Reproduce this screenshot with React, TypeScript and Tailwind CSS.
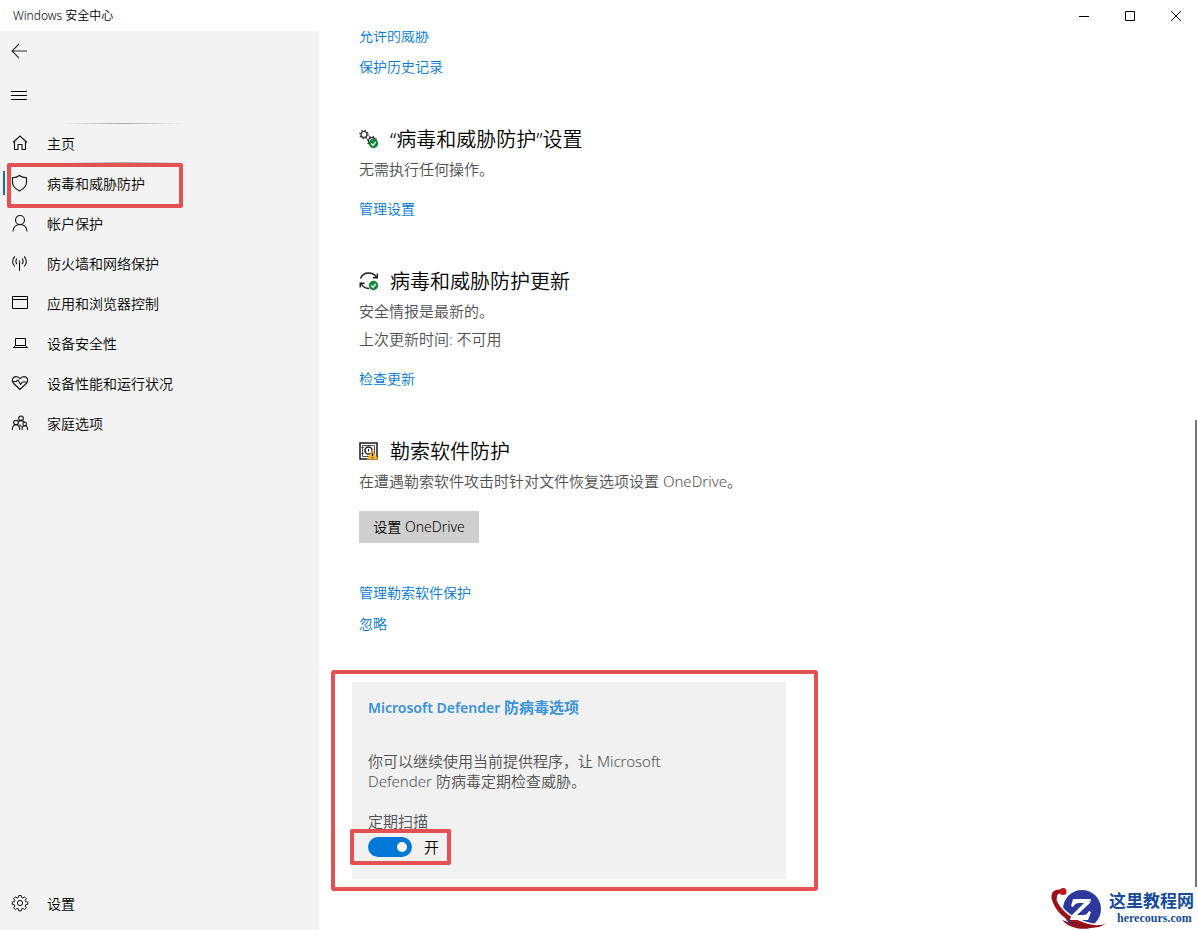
import React from "react";

function LineIcon({ children }: { children: React.ReactNode }) {
  return (
    <svg width="18" height="18" viewBox="0 0 18 18" fill="none" stroke="#111" strokeWidth="1.1" aria-hidden="true" className="shrink-0">
      {children}
    </svg>
  );
}

const GEAR =
  "M7.8 1.5h2.4l.4 2 1.3.5 1.7-1.1 1.7 1.7-1.1 1.7.5 1.3 2 .4v2.4l-2 .4-.5 1.3 1.1 1.7-1.7 1.7-1.7-1.1-1.3.5-.4 2H7.8l-.4-2-1.3-.5-1.7 1.1-1.7-1.7 1.1-1.7-.5-1.3-2-.4V8l2-.4.5-1.3-1.1-1.7 1.7-1.7L6.1 4l1.3-.5z";

const icons = {
  back: <path d="M17 9H2M9 2 2 9l7 7" stroke="#333" />,
  menu: <path d="M1 4.500h16M1 8.500h16M1 12.500h16" strokeWidth="1" stroke="#000" />,
  home: <path d="M2 8.500 9 2l7 6.500M3.500 7.500v8h3.500v-5h4v5h3.500v-8" />,
  shield: <path d="M8.500 1.500c-2 1.700-4.300 2.200-7 2.300v4.500c0 4 3 6.700 7 8.700 4-2 7-4.700 7-8.700V3.800c-2.700-.1-5-.6-7-2.300z" />,
  account: (
    <>
      <circle cx="9" cy="6" r="4.500" />
      <path d="M2 17.500c.3-4.300 3-7 7-7s6.700 2.700 7 7" />
    </>
  ),
  firewall: (
    <>
      <path d="M8.500 8v9" stroke="#000" />
      <circle cx="8.500" cy="7" r=".8" fill="#111" stroke="none" />
      <path d="M6 4.500c-1.300 1.600-1.300 4 0 5.600M3.800 2.500C.9 5.300.9 9.500 3.800 12.300M11 4.500c1.300 1.600 1.300 4 0 5.600M13.200 2.500c2.900 2.800 2.900 7 0 9.800" />
    </>
  ),
  browser: <path d="M1.500 2.500h15v12h-15zM1.500 5.500h15" strokeWidth="1" stroke="#000" />,
  device: <path d="M4.500 4.500h10v7h-10zM4.500 11.500l-2 2h14l-2-2" strokeWidth="1" stroke="#000" />,
  health: (
    <>
      <path d="M9 15.500 2.300 9C.8 7.300 1 4.800 2.600 3.500 4.500 2 7.400 2.400 9 4.800c1.600-2.400 4.500-2.800 6.400-1.300 1.600 1.300 1.800 3.800.3 5.500z" />
      <path d="M2 7.500h3.200L7 6l2.500 4.500 2-2.500H16" />
    </>
  ),
  family: (
    <>
      <circle cx="10" cy="4.300" r="2.300" />
      <circle cx="5" cy="8.500" r="2.300" />
      <circle cx="13.700" cy="10" r="1.800" />
      <path d="M1.300 16c0-3.200 1.400-5.200 3.700-5.200S8.700 12.800 8.700 16M11 16c0-2.600.8-4.200 2.700-4.200s3 1.600 3 4.200M7.300 7.500c.7-.6 1.500-.9 2.700-.9 2 0 3.300 1 3.700 1.600M8.500 10.500l2 2.500" />
    </>
  ),
  settings: (
    <>
      <path d={GEAR} strokeWidth="1" />
      <circle cx="9" cy="9" r="2.600" strokeWidth="1" />
    </>
  ),
};

const navItems = [
  { label: "主页", icon: icons.home },
  { label: "病毒和威胁防护", icon: icons.shield, current: true },
  { label: "帐户保护", icon: icons.account },
  { label: "防火墙和网络保护", icon: icons.firewall },
  { label: "应用和浏览器控制", icon: icons.browser },
  { label: "设备安全性", icon: icons.device },
  { label: "设备性能和运行状况", icon: icons.health },
  { label: "家庭选项", icon: icons.family },
];

function Check() {
  return (
    <>
      <circle cx="14.500" cy="14.500" r="4.700" fill="#15883a" />
      <path d="m12.300 14.500 1.700 1.700 2.800-3.200" fill="none" stroke="#fff" strokeWidth="1.300" />
    </>
  );
}

function GearsIcon() {
  return (
    <svg width="20" height="20" viewBox="0 1 20 20" fill="none" aria-hidden="true">
      <circle cx="5" cy="5.500" r="3" stroke="#222" strokeWidth="1.100" />
      <circle cx="5" cy="5.500" r="4.100" stroke="#222" strokeWidth="1.200" strokeDasharray="1.500 1.720" />
      <circle cx="13" cy="12" r="3.400" stroke="#222" strokeWidth="1.200" />
      <circle cx="13" cy="12" r="4.500" stroke="#222" strokeWidth="1.300" strokeDasharray="1.500 2.034" />
      <Check />
    </svg>
  );
}

function UpdateIcon() {
  return (
    <svg width="20" height="20" viewBox="0 1 20 20" fill="none" stroke="#1a1a2a" strokeWidth="1.400" aria-hidden="true">
      <path d="M1.500 7.500C3 3.800 6 2 9.500 2c3.600 0 6.500 1.500 8 4.500M18.300 2.500v4.300H14M10 17.500c-3.800 0-6.500-2-8-5M1.200 16.500v-4.300h4.300" />
      <g stroke="none">
        <Check />
      </g>
    </svg>
  );
}

function SafeIcon() {
  return (
    <svg width="20" height="20" viewBox="0 1 20 20" fill="none" stroke="#1a1a2a" aria-hidden="true">
      <path d="M1 2h17v16H1z" strokeWidth="1.500" />
      <path d="M3.500 4.500h12v11h-12z" strokeWidth="1" stroke="#555" />
      <circle cx="9.500" cy="9.500" r="3.600" strokeWidth="1.500" />
      <path d="M9.500 8v2.500M2.500 6.500h2M2.500 12.500h2" />
      <path d="m13.500 8.500 5.500 10H8z" fill="#fdb913" stroke="none" />
      <path d="M13.500 11.800v3.200M13.500 16v1.300" strokeWidth="1.300" />
    </svg>
  );
}

function TitleBar() {
  return (
    <header className="flex h-[31px] shrink-0 items-center justify-between bg-white pl-[13px]">
      <span className="text-[12px] leading-5 text-black">Windows 安全中心</span>
      <div className="flex h-full">
        <button aria-label="最小化" className="flex w-[46px] items-center justify-center pl-[2px]">
          <svg width="10" height="10" stroke="#000"><path d="M0 5.500h10" /></svg>
        </button>
        <button aria-label="最大化" className="flex w-[46px] items-center justify-center pl-[2px]">
          <svg width="10" height="10" stroke="#000" fill="none"><path d="M.5.5h9v9h-9z" /></svg>
        </button>
        <button aria-label="关闭" className="flex w-[46px] items-center justify-center pl-[2px]">
          <svg width="10" height="10" stroke="#000"><path d="m0 0 10 10M10 0 0 10" /></svg>
        </button>
      </div>
    </header>
  );
}

function RevealLine({ className }: { className: string }) {
  return <span className={`absolute h-px bg-gradient-to-r from-transparent via-[#aaa] to-transparent ${className}`} />;
}

function Sidebar() {
  return (
    <aside className="flex w-[319px] shrink-0 flex-col bg-[#f3f3f3] text-[14px] leading-5 text-black">
      <button aria-label="返回" className="flex h-10 w-10 items-center pl-[10px]">
        <LineIcon>{icons.back}</LineIcon>
      </button>
      <button aria-label="菜单" className="mt-[5px] flex h-10 w-10 items-center pl-[10px]">
        <LineIcon>{icons.menu}</LineIcon>
      </button>
      <nav className="mt-2">
        <ul>
          {navItems.map((item, i) => (
            <li key={item.label} className="relative">
              {i === 0 && <RevealLine className="-top-px left-[60px] w-[125px]" />}
              {item.current && (
                <>
                  <RevealLine className="-top-[2px] left-[60px] w-[132px]" />
                  <span className="absolute top-[7px] left-[3px] h-6 w-[2px] bg-[#1b6ca8]" />
                  <span className="absolute -top-px left-[7px] h-[45px] w-[176px] rounded-[2px] border-4 border-[#e55052]" />
                </>
              )}
              <a href="#" aria-current={item.current ? "page" : undefined} className="flex h-10 items-center gap-[18px] pl-[11px] [&>svg]:mb-[2px]">
                <LineIcon>{item.icon}</LineIcon>
                {item.label}
              </a>
            </li>
          ))}
        </ul>
      </nav>
      <a href="#" className="mt-auto mb-[6px] flex h-10 items-center gap-[18px] pl-[11px] [&>svg]:mb-[2px]">
        <LineIcon>{icons.settings}</LineIcon>
        设置
      </a>
    </aside>
  );
}

function Section({ icon, title, lines, children }: {
  icon: React.ReactNode;
  title: string;
  lines: string[];
  children: React.ReactNode;
}) {
  return (
    <section className="mt-[47px]">
      <h2 className="flex items-center gap-[11px] text-[20px] leading-8 text-black">
        {icon}
        {title}
      </h2>
      <div className="-mt-px mb-4 text-[15px] leading-7 text-[#505050]">
        {lines.map((l) => <p key={l}>{l}</p>)}
      </div>
      {children}
    </section>
  );
}

function TextLink({ children }: { children: React.ReactNode }) {
  return <a href="#" className="block w-fit text-[14px] leading-5 text-[#0078d7]">{children}</a>;
}

function DefenderOptions() {
  return (
    <section className="mt-9 -ml-7 w-[487px] rounded-[3px] border-4 border-[#e55052] py-2 pr-7 pl-[17px]">
      <div className="bg-[#f1f1f1] px-4 pt-[15px] pb-[22px] text-[15px] leading-5 text-[#505050]">
        <h3 className="h-5 font-semibold text-[#3a92d8]">
          <span className="text-[14px]">Microsoft Defender </span>防病毒选项
        </h3>
        <p className="mt-[34px] max-w-[310px]">你可以继续使用当前提供程序，让 Microsoft Defender 防病毒定期检查威胁。</p>
        <label htmlFor="periodic-scan" className="mt-5 block">定期扫描</label>
        <div className="relative mt-[6px] flex h-5 w-fit items-center gap-3">
          <input
            id="periodic-scan"
            type="checkbox"
            role="switch"
            defaultChecked
            className="flex h-5 w-11 appearance-none items-center justify-end rounded-full bg-[#0078d7] px-[5px] before:size-[10px] before:rounded-full before:bg-white"
          />
          <span className="text-black">开</span>
          <span className="pointer-events-none absolute -top-2 -left-[18px] h-9 w-[101px] rounded-[2px] border-4 border-[#e55052]" />
        </div>
      </div>
    </section>
  );
}

function SiteMark() {
  return (
    <div className="absolute right-1 bottom-0 flex items-center">
      <svg width="58" height="44" viewBox="0 0 58 44" aria-hidden="true">
        <circle cx="31" cy="23" r="19" fill="#2d3a9b" />
        <path d="M12 4C3 2-1 7 1 14c3 11 14 21 27 25 12 4 22 4 28-3-7 4-15 3-25-1C18 30 8 21 6 13c-1-4 1-6 6-6z" fill="#9c1016" />
        <path d="M11 34c8 9 24 12 36 5-11 1-24 0-36-5z" fill="#8f1018" />
        <path d="M6 13c3 9 13 18 25 22 10 4 18 5 25 1" fill="none" stroke="#fff" strokeWidth="1.500" />
        <circle cx="12" cy="5.500" r="3.500" fill="#c0151c" />
        <path d="M22 13h18l-1 4-13 12h6c3 0 4-1 6-4l2 1-3 8H19l1-4 13-13h-5c-3 0-4 1-6 4l-2-1z" fill="#fff" />
      </svg>
      <div className="flex flex-col text-[#17499c]">
        <span className="font-['Noto_Sans_CJK_SC',sans-serif] text-[17px] leading-5 font-bold">这里教程网</span>
        <span className="pl-2 font-['Liberation_Serif',serif] text-[12px] leading-4 font-bold">herecours.com</span>
      </div>
    </div>
  );
}

export default function App() {
  return (
    <div className="relative flex h-screen flex-col overflow-hidden bg-white font-['Noto_Sans','Noto_Sans_CJK_SC',sans-serif] font-[350]">
      <TitleBar />
      <div className="flex min-h-0 flex-1">
        <Sidebar />
        <main className="min-w-0 flex-1 overflow-hidden pl-10">
          <div className="-mt-[5px] flex flex-col gap-[11px]">
            <TextLink>允许的威胁</TextLink>
            <TextLink>保护历史记录</TextLink>
          </div>
          <Section icon={<GearsIcon />} title="“病毒和威胁防护”设置" lines={["无需执行任何操作。"]}>
            <TextLink>管理设置</TextLink>
          </Section>
          <Section icon={<UpdateIcon />} title="病毒和威胁防护更新" lines={["安全情报是最新的。", "上次更新时间: 不可用"]}>
            <TextLink>检查更新</TextLink>
          </Section>
          <Section icon={<SafeIcon />} title="勒索软件防护" lines={["在遭遇勒索软件攻击时针对文件恢复选项设置 OneDrive。"]}>
            <button className="h-8 w-[120px] bg-[#cfcfcf] text-[14px] leading-5 text-black">设置 OneDrive</button>
            <div className="mt-10 flex flex-col gap-[11px]">
              <TextLink>管理勒索软件保护</TextLink>
              <TextLink>忽略</TextLink>
            </div>
          </Section>
          <DefenderOptions />
        </main>
        <div className="flex shrink-0 flex-col pt-[389px] pb-[43px] pr-px">
          <div className="w-[2px] flex-1 bg-[#777]" />
        </div>
      </div>
      <SiteMark />
    </div>
  );
}
